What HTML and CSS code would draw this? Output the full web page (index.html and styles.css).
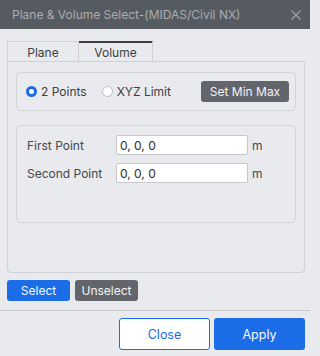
FILE: index.html
```html
<!DOCTYPE html>
<html>
<head>
<meta charset="utf-8">
<link rel="stylesheet" href="styles.css">
</head>
<body>
<div class="window">
  <div class="titlebar">
    <span class="title">Plane &amp; Volume Select-(MIDAS/Civil NX)</span>
    <svg class="close-x" width="10" height="10" viewBox="0 0 10 10"><path d="M0.5 0.5 L9.5 9.5 M9.5 0.5 L0.5 9.5" stroke="#9ea2a7" stroke-width="1.2" fill="none"/></svg>
  </div>
  <div class="content">
    <div class="tabs">
      <div class="tab">Plane</div>
      <div class="tab active">Volume</div>
    </div>
    <div class="tabpanel">
      <div class="box radiobox">
        <label class="radio"><span class="dot checked"></span>2 Points</label>
        <label class="radio"><span class="dot"></span>XYZ Limit</label>
        <button class="btn gray minmax">Set Min Max</button>
      </div>
      <div class="box pointsbox">
        <div class="row">
          <span class="label">First Point</span>
          <input class="field" value="0, 0, 0">
          <span class="unit">m</span>
        </div>
        <div class="row">
          <span class="label">Second Point</span>
          <input class="field" value="0, 0, 0">
          <span class="unit">m</span>
        </div>
      </div>
    </div>
    <div class="selrow">
      <button class="btn blue small">Select</button>
      <button class="btn gray small">Unselect</button>
    </div>
  </div>
  <div class="footer">
    <button class="btn outline big">Close</button>
    <button class="btn blue big">Apply</button>
  </div>
</div>
</body>
</html>
```
FILE: styles.css
```css
* { box-sizing: border-box; }
html, body { margin: 0; padding: 0; }
body {
  background: #e9eaee;
  font-family: Inter, "Noto Sans", sans-serif;
  font-size: 12px;
  color: #3c3f44;
}
.window { width: 310px; height: 356px; background: #e9eaee; }
.titlebar {
  height: 29px;
  background: #565b61;
  display: flex;
  align-items: center;
  justify-content: space-between;
  padding: 0 9px 0 12px;
}
.title { color: #a9adb2; font-size: 12px; letter-spacing: 0; }
.close-x { display: block; }
.content { padding: 12px 5px 0 7px; }
.tabs { display: flex; height: 20px; }
.tab {
  width: 72px;
  border: 1px solid #cfd1d5;
  border-bottom: none;
  display: flex;
  align-items: center;
  justify-content: center;
  color: #3c3f44;
  font-size: 12px;
  padding-top: 1px;
}
.tab.active {
  width: 74px;
  border-left: none;
  border-top: 1px solid #3a3d42;
  box-shadow: inset 0 1px 0 #3a3d42;
}
.tabpanel {
  height: 212px;
  border: 1px solid #cfd1d5;
  border-radius: 0 0 4px 4px;
  padding: 10px 8px 0 8px;
  display: flex;
  flex-direction: column;
  gap: 14px;
}
.box {
  border: 1px solid #d3d5d9;
  border-radius: 4px;
}
.radiobox {
  height: 39px;
  display: flex;
  align-items: center;
  padding: 0 6px 0 9px;
}
.radio {
  display: flex;
  align-items: center;
  gap: 4px;
  color: #3c3f44;
}
.radio + .radio { margin-left: 15px; }
.dot {
  width: 11px;
  height: 11px;
  border-radius: 50%;
  background: #fff;
  border: 1px solid #b9bcc1;
}
.dot.checked { border: 3px solid #1a6de6; }
.minmax { margin-left: auto; width: 88px; height: 21px; }
.pointsbox {
  height: 98px;
  padding: 9px 10px;
  display: flex;
  flex-direction: column;
  gap: 8px;
}
.row { display: flex; align-items: center; height: 20px; }
.label { width: 89px; color: #44474c; }
.field {
  width: 132px;
  height: 20px;
  border: 1px solid #c6c8cc;
  border-radius: 2px;
  background: #fff;
  font-family: Inter, "Noto Sans", sans-serif;
  font-size: 12px;
  color: #2b2d31;
  padding: 0 3px;
  outline: none;
}
.unit { margin-left: 4px; color: #44474c; }
.btn {
  font-family: Inter, "Noto Sans", sans-serif;
  font-size: 12px;
  border: none;
  border-radius: 3px;
  padding: 0;
  cursor: pointer;
}
.btn.gray { background: #62666c; color: #f2f3f5; }
.btn.blue { background: #1a6de6; color: #f4f8ff; }
.btn.outline { background: #fff; color: #1a6de6; border: 1px solid #1a6de6; }
.selrow { display: flex; gap: 5px; margin-top: 7px; height: 21px; }
.btn.small { width: 63px; height: 21px; }
.footer {
  margin-top: 9px;
  border-top: 1px solid #c5c7cb;
  display: flex;
  justify-content: flex-end;
  gap: 4px;
  padding: 7px 5px 0 0;
}
.btn.big { width: 91px; height: 32px; font-size: 12.5px; }
```
